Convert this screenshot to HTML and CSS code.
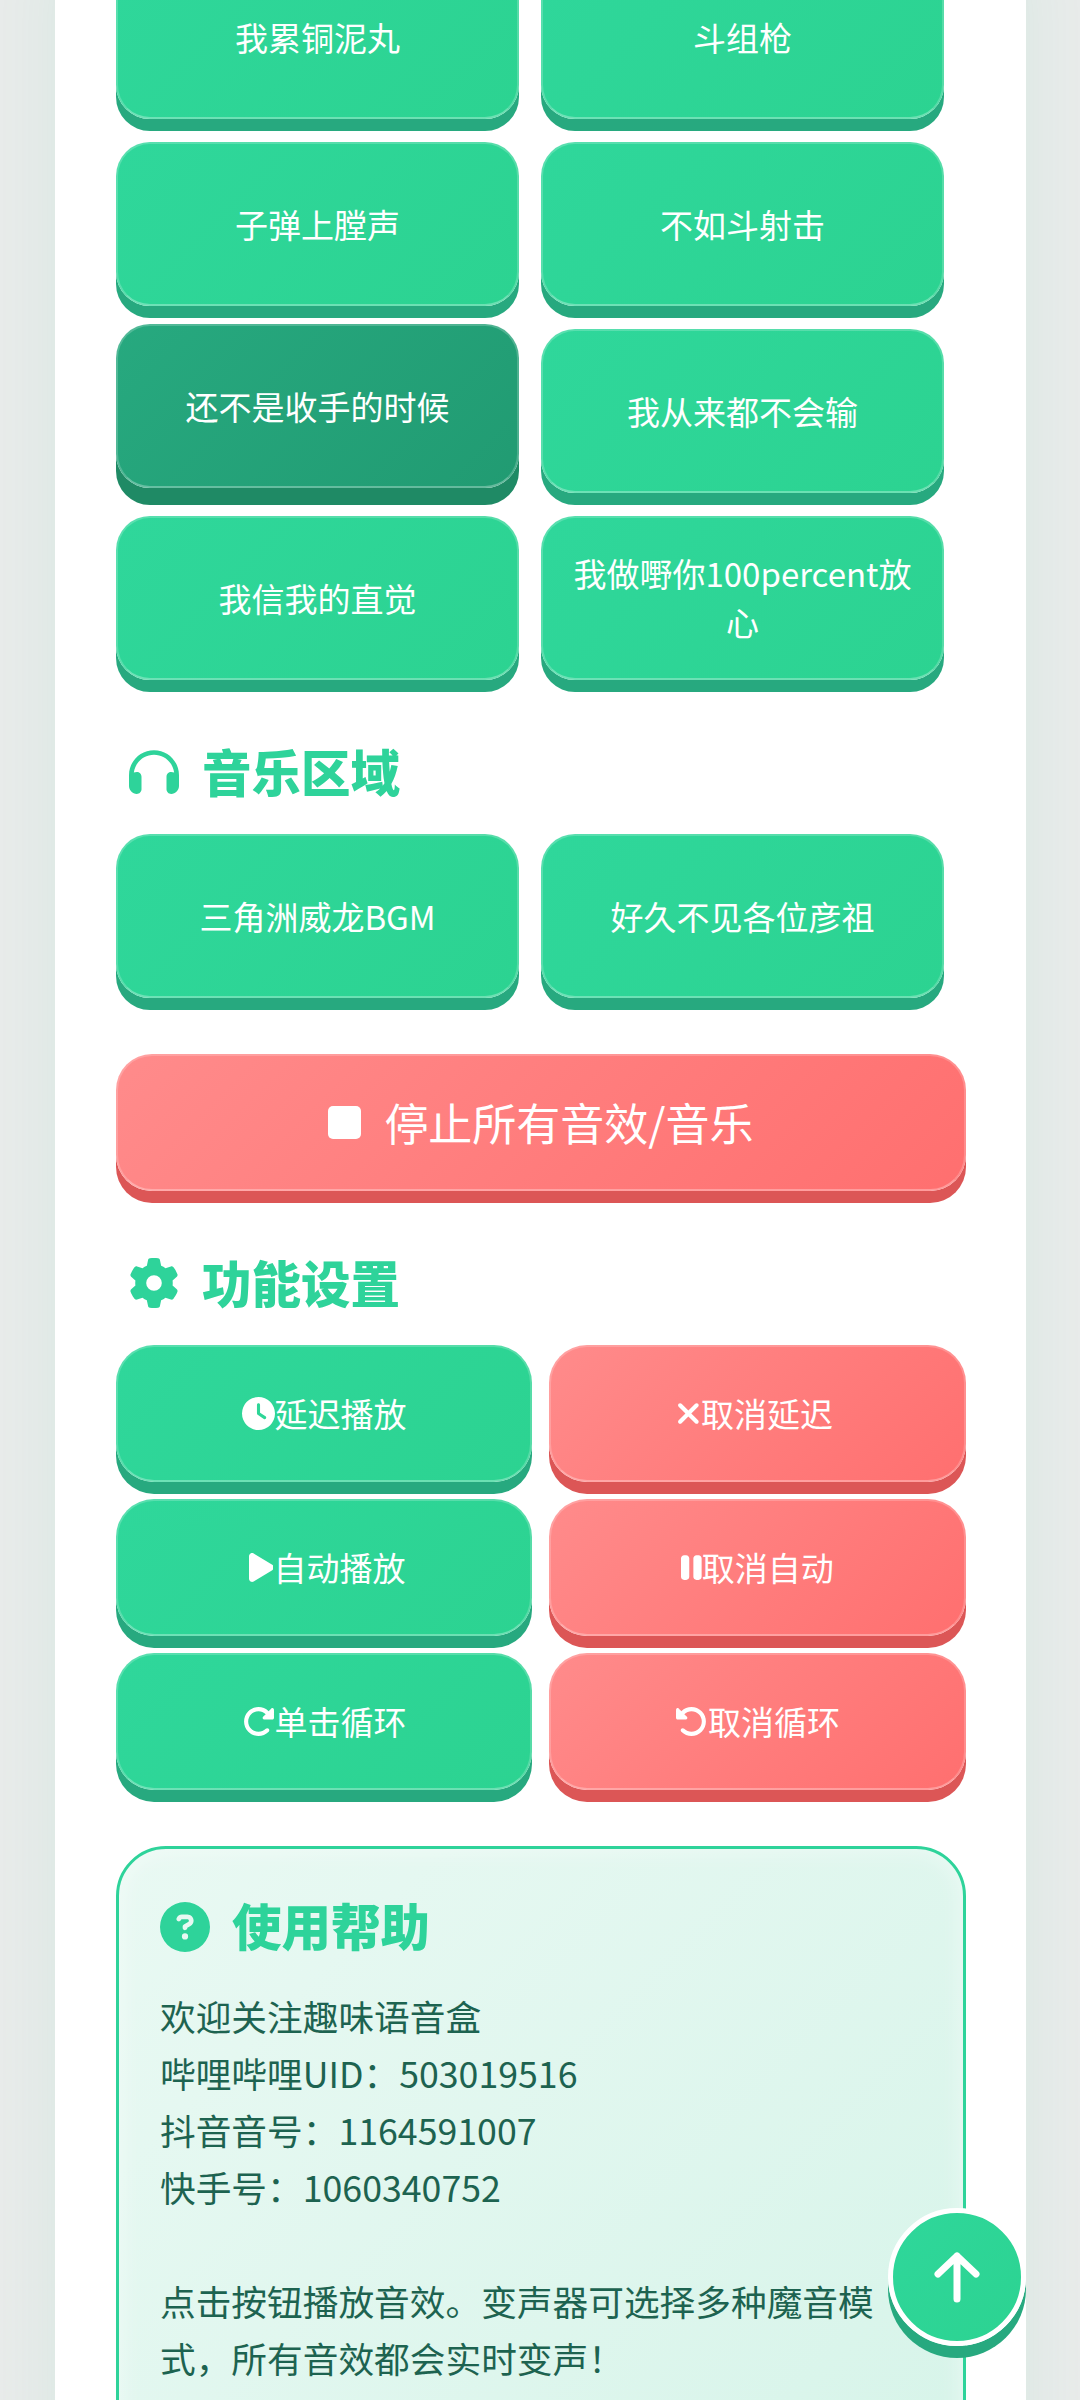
FILE: index.html
```html
<!DOCTYPE html>
<html lang="zh-CN">

<head>
  <meta charset="UTF-8">
  <meta name="viewport" content="width=device-width, initial-scale=1.0">
  <title>趣味语音盒</title>

  <link rel="stylesheet" href="styles.css">

</head>

<body>

  <main class="panel">

    <section class="sound-grid">
      <button class="btn sound">我累铜泥丸</button>
      <button class="btn sound">斗组枪</button>
      <button class="btn sound">子弹上膛声</button>
      <button class="btn sound">不如斗射击</button>
      <button class="btn sound playing">还不是收手的时候</button>
      <button class="btn sound">我从来都不会输</button>
      <button class="btn sound">我信我的直觉</button>
      <button class="btn sound">我做嘢你100percent放心</button>
    </section>

    <h2 class="section-title">
      <svg class="title-icon" viewBox="0 0 512 512"><path d="M256 80C149.9 80 62.4 159.4 49.6 262c9.4-3.8 19.6-6 30.4-6c26.5 0 48 21.5 48 48V432c0 26.5-21.5 48-48 48c-44.2 0-80-35.8-80-80V384 336 288C0 146.6 114.6 32 256 32s256 114.6 256 256v48 48 16c0 44.2-35.8 80-80 80c-26.5 0-48-21.5-48-48V304c0-26.5 21.5-48 48-48c10.8 0 21 2.1 30.4 6C449.6 159.4 362.1 80 256 80z"/></svg>
      音乐区域
    </h2>

    <section class="sound-grid">
      <button class="btn sound">三角洲威龙BGM</button>
      <button class="btn sound">好久不见各位彦祖</button>
    </section>

    <button class="btn red stop-all">
      <svg class="stop-icon" viewBox="0 0 33 33"><rect width="33" height="33" rx="5"/></svg>
      停止所有音效/音乐
    </button>

    <h2 class="section-title">
      <svg class="title-icon" viewBox="0 0 512 512"><path d="M495.9 166.6c3.2 8.7 .5 18.4-6.4 24.6l-43.3 39.4c1.1 8.3 1.7 16.8 1.7 25.4s-.6 17.1-1.7 25.4l43.3 39.4c6.9 6.2 9.6 15.9 6.4 24.6c-4.4 11.9-9.7 23.3-15.8 34.3l-4.7 8.1c-6.6 11-14 21.4-22.1 31.2c-5.9 7.2-15.7 9.6-24.5 6.8l-55.7-17.7c-13.4 10.3-28.2 18.9-44 25.4l-12.5 57.1c-2 9.1-9 16.3-18.2 17.8c-13.8 2.3-28 3.5-42.5 3.5s-28.7-1.2-42.5-3.5c-9.2-1.5-16.2-8.7-18.2-17.8l-12.5-57.1c-15.8-6.5-30.6-15.1-44-25.4L83.1 425.9c-8.8 2.8-18.6 .3-24.5-6.8c-8.1-9.8-15.5-20.2-22.1-31.2l-4.7-8.1c-6.1-11-11.4-22.4-15.8-34.3c-3.2-8.7-.5-18.4 6.4-24.6l43.3-39.4C64.6 273.1 64 264.6 64 256s.6-17.1 1.7-25.4L22.4 191.2c-6.9-6.2-9.6-15.9-6.4-24.6c4.4-11.9 9.7-23.3 15.8-34.3l4.7-8.1c6.6-11 14-21.4 22.1-31.2c5.9-7.2 15.7-9.6 24.5-6.8l55.7 17.7c13.4-10.3 28.2-18.9 44-25.4l12.5-57.1c2-9.1 9-16.3 18.2-17.8C227.3 1.2 241.5 0 256 0s28.7 1.2 42.5 3.5c9.2 1.5 16.2 8.7 18.2 17.8l12.5 57.1c15.8 6.5 30.6 15.1 44 25.4l55.7-17.7c8.8-2.8 18.6-.3 24.5 6.8c8.1 9.8 15.5 20.2 22.1 31.2l4.7 8.1c6.1 11 11.4 22.4 15.8 34.3zM256 336a80 80 0 1 0 0-160 80 80 0 1 0 0 160z"/></svg>
      功能设置
    </h2>

    <section class="func-grid">
      <button class="btn func">
        <svg class="func-icon" viewBox="0 0 512 512"><path d="M256 0a256 256 0 1 1 0 512A256 256 0 1 1 256 0zM232 120V256c0 8 4 15.5 10.7 20l96 64c11 7.4 25.9 4.4 33.3-6.7s4.4-25.9-6.7-33.3L280 243.2V120c0-13.3-10.7-24-24-24s-24 10.7-24 24z"/></svg>延迟播放
      </button>
      <button class="btn func red cancel-delay">
        <svg class="func-icon" viewBox="0 0 384 512"><path d="M342.6 150.6c12.5-12.5 12.5-32.8 0-45.3s-32.8-12.5-45.3 0L192 210.7 86.6 105.4c-12.5-12.5-32.8-12.5-45.3 0s-12.5 32.8 0 45.3L146.7 256 41.4 361.4c-12.5 12.5-12.5 32.8 0 45.3s32.8 12.5 45.3 0L192 301.3 297.4 406.6c12.5 12.5 32.8 12.5 45.3 0s12.5-32.8 0-45.3L237.3 256 342.6 150.6z"/></svg>取消延迟
      </button>
      <button class="btn func">
        <svg class="func-icon play-icon" viewBox="0 0 384 512"><path d="M73 39c-14.8-9.1-33.4-9.4-48.5-.9S0 62.6 0 80V432c0 17.4 9.4 33.4 24.5 41.9s33.7 8.1 48.5-.9L361 297c14.3-8.7 23-24.2 23-41s-8.7-32.2-23-41L73 39z"/></svg>自动播放
      </button>
      <button class="btn func red">
        <svg class="func-icon" viewBox="0 0 320 512"><path d="M48 64C21.5 64 0 85.5 0 112V400c0 26.5 21.5 48 48 48H80c26.5 0 48-21.5 48-48V112c0-26.5-21.5-48-48-48H48zm192 0c-26.5 0-48 21.5-48 48V400c0 26.5 21.5 48 48 48h32c26.5 0 48-21.5 48-48V112c0-26.5-21.5-48-48-48H240z"/></svg>取消自动
      </button>
      <button class="btn func">
        <svg class="func-icon" viewBox="0 0 512 512"><path d="M463.5 224H472c13.3 0 24-10.7 24-24V72c0-9.7-5.8-18.5-14.8-22.2s-19.3-1.7-26.2 5.2L413.4 96.6c-87.6-86.5-228.7-86.2-315.8 1c-87.5 87.5-87.5 229.3 0 316.8s229.3 87.5 316.8 0c12.5-12.5 12.5-32.8 0-45.3s-32.8-12.5-45.3 0c-62.5 62.5-163.8 62.5-226.3 0s-62.5-163.8 0-226.3c62.2-62.2 162.7-62.5 225.3-1L327 183c-6.9 6.9-8.9 17.2-5.2 26.2s12.5 14.8 22.2 14.8H463.5z"/></svg>单击循环
      </button>
      <button class="btn func red">
        <svg class="func-icon" viewBox="0 0 512 512"><path d="M48.5 224H40c-13.3 0-24-10.7-24-24V72c0-9.7 5.8-18.5 14.8-22.2s19.3-1.7 26.2 5.2L98.6 96.6c87.6-86.5 228.7-86.2 315.8 1c87.5 87.5 87.5 229.3 0 316.8s-229.3 87.5-316.8 0c-12.5-12.5-12.5-32.8 0-45.3s32.8-12.5 45.3 0c62.5 62.5 163.8 62.5 226.3 0s62.5-163.8 0-226.3c-62.2-62.2-162.7-62.5-225.3-1L185 183c6.9 6.9 8.9 17.2 5.2 26.2s-12.5 14.8-22.2 14.8H48.5z"/></svg>取消循环
      </button>
    </section>

    <section class="help-card">
      <h2 class="section-title help-title">
        <svg class="title-icon" viewBox="0 0 512 512"><path d="M256 512A256 256 0 1 0 256 0a256 256 0 1 0 0 512zM169.8 165.3c7.9-22.3 29.1-37.3 52.8-37.3h58.3c34.9 0 63.1 28.3 63.1 63.1c0 22.6-12.1 43.5-31.7 54.8L280 264.4c-.2 13-10.9 23.6-24 23.6c-13.3 0-24-10.7-24-24V250.5c0-8.6 4.6-16.5 12.1-20.8l44.3-25.4c4.7-2.7 7.6-7.7 7.6-13.1c0-8.4-6.8-15.1-15.1-15.1H222.6c-3.4 0-6.4 2.1-7.5 5.3l-.4 1.2c-4.4 12.5-18.2 19-30.6 14.6s-19-18.2-14.6-30.6l.4-1.2zM224 352a32 32 0 1 1 64 0 32 32 0 1 1 -64 0z"/></svg>
        使用帮助
      </h2>
      <p class="help-text">
        欢迎关注趣味语音盒<br>
        哔哩哔哩UID：503019516<br>
        抖音音号：1164591007<br>
        快手号：1060340752<br>
        <br>
        点击按钮播放音效。变声器可选择多种魔音模式，所有音效都会实时变声！
      </p>
    </section>

  </main>

  <button class="to-top">
    <svg class="to-top-icon" viewBox="0 0 48 54"><path d="M24 49V6M5 24 24 6l19 18"/></svg>
  </button>

</body>

</html>
```

FILE: styles.css
```css
* {
  box-sizing: border-box;
}

html,
body {
  height: 2400px;
  margin: 0;
  overflow: hidden;
}

body {
  background-color: #e8ebea;
  font-family: "Noto Sans CJK SC", "Noto Sans", sans-serif;
}

.panel {
  width: 971px;
  height: 2600px;
  margin: -45px 0 0 55px;
  padding: 0 60px 0 61px;
  background-color: #fff;
  box-shadow: 0 0 60px rgba(46, 211, 154, 0.08);
}

/* buttons */
.btn {
  display: flex;
  align-items: center;
  justify-content: center;
  padding: 0 24px;
  border: 2px solid rgba(255, 255, 255, 0.2);
  border-bottom-color: rgba(255, 255, 255, 0.3);
  border-radius: 34px;
  background: linear-gradient(135deg, #2fd79b, #2cd391) border-box;
  box-shadow: 0 12px 0 #27a97f;
  color: #fff;
  font-family: inherit;
  font-size: 33px;
  line-height: 49px;
}

.btn.red {
  background: linear-gradient(135deg, #ff8b8b, #ff6f6f) border-box;
  box-shadow: 0 12px 0 #dc5656;
}

.sound-grid {
  display: grid;
  grid-template-columns: repeat(2, 403px);
  gap: 23px 22px;
}

.sound {
  height: 164px;
}

.sound.playing {
  background: linear-gradient(135deg, #27a97f, #219b72) border-box;
  box-shadow: 0 17px 0 #1f8a65;
  transform: translateY(-5px);
}

.stop-all {
  gap: 23px;
  width: 100%;
  height: 137px;
  margin-top: 56px;
  border-radius: 36px;
  font-size: 44px;
}

.stop-icon {
  width: 33px;
  height: 33px;
  fill: #fff;
}

.func-grid {
  display: grid;
  grid-template-columns: 416px 417px;
  gap: 17px;
}

.func {
  height: 137px;
  border-radius: 38px;
}

.cancel-delay {
  padding-right: 30px;
}

.func-icon {
  flex: none;
  height: 33px;
  fill: #fff;
}

.play-icon {
  margin-left: 6px;
}

/* section titles */
.section-title {
  display: flex;
  align-items: center;
  gap: 23px;
  height: 68px;
  margin: 56px 0 30px;
  padding-left: 13px;
  color: #2ed39a;
  font-size: 49.5px;
  font-weight: 900;
}

.title-icon {
  flex: none;
  width: 50px;
  height: 50px;
  margin-top: 4px;
  fill: #2ed39a;
}

/* help */
.help-card {
  height: 700px;
  margin-top: 56px;
  padding: 41px 41px;
  border: 3px solid #2ed39a;
  border-radius: 50px;
  background: linear-gradient(135deg, #e9f9f3, #d6f4e9);
  box-shadow: inset 0 0 24px rgba(255, 255, 255, 0.5);
}

.help-title {
  gap: 22px;
  margin: 0 0 28.5px;
  padding-left: 0;
}

.help-title .title-icon {
  margin-top: 6px;
}

.help-text {
  margin: 0;
  color: #1d6350;
  font-size: 35.7px;
  line-height: 57px;
}

/* back to top */
.to-top {
  position: fixed;
  top: 2208px;
  left: 888px;
  display: flex;
  align-items: center;
  justify-content: center;
  width: 138px;
  height: 138px;
  padding: 0;
  border: 5px solid #fff;
  border-radius: 50%;
  background: linear-gradient(135deg, #2fd79b, #2cd391) border-box;
  box-shadow: 0 12px 0 #27a97f;
}

.to-top-icon {
  width: 48px;
  height: 54px;
  fill: none;
  stroke: #fff;
  stroke-width: 7;
  stroke-linecap: round;
  stroke-linejoin: round;
}
```
